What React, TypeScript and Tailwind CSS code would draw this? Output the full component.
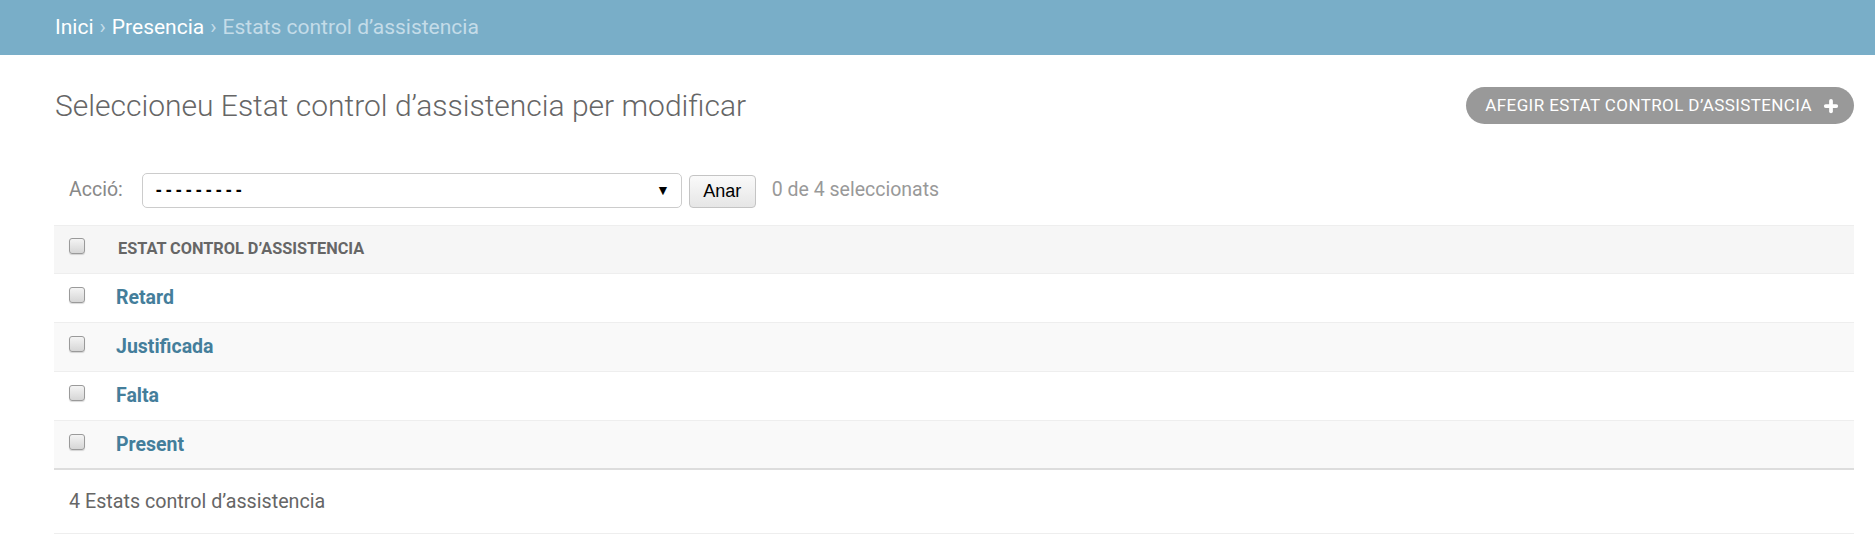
import { Plus } from 'lucide-react'

const rows = ['Retard', 'Justificada', 'Falta', 'Present']

function FakeCheckbox() {
  return (
    <span className="block w-4 h-4 rounded-[3px] border border-[#9a9a9a] bg-gradient-to-b from-[#f4f4f4] to-[#d6d6d6] shadow-[0_1px_1px_rgba(0,0,0,0.15)]" />
  )
}

export default function App() {
  return (
    <div className="min-h-screen bg-white font-['Roboto','Liberation_Sans',sans-serif] text-[#333]">
      <div className="h-[55px] bg-[#79aec8] px-[55px] flex items-center text-[21px] text-[#c4dce8]">
        <span className="text-white">Inici</span>
        <span className="mx-[6px] text-[#c4dce8]">›</span>
        <span className="text-white">Presencia</span>
        <span className="mx-[6px] text-[#c4dce8]">›</span>
        <span>Estats control d’assistencia</span>
      </div>

      <div className="pl-[54px] pr-[21px]">
        <div className="mt-[32px] h-[37px] flex items-center justify-between">
          <h1 className="pl-[1px] text-[30px] font-light text-[#666] leading-none">
            Seleccioneu Estat control d’assistencia per modificar
          </h1>
          <a className="h-[37px] pl-[19px] pr-[14px] rounded-full bg-[#999] flex items-center gap-[10px] text-white text-[17px] font-normal uppercase tracking-[0.4px]">
            Afegir estat control d’assistencia
            <Plus size={18} strokeWidth={5} />
          </a>
        </div>

        <div className="mt-[48px] h-[36px] flex items-center pl-[15px] text-[19.5px]">
          <span className="text-[#888] mr-[19px]">Acció:</span>
          <div className="w-[540px] h-[35px] border border-[#ccc] rounded-[5px] flex items-center justify-between pl-[13px] pr-[11px] font-['Liberation_Sans',sans-serif] text-black">
            <span className="font-bold tracking-[4px] text-[18px]">---------</span>
            <span className="text-[14px]">▼</span>
          </div>
          <div className="ml-[7px] w-[67px] h-[33px] mt-[3px] border border-[#c4c4c4] rounded-[4px] bg-gradient-to-b from-[#fafafa] to-[#e6e6e6] flex items-center justify-center font-['Liberation_Sans',sans-serif] text-[18px] text-black">
            Anar
          </div>
          <span className="ml-[16px] text-[#999]">0 de 4 seleccionats</span>
        </div>

        <div className="mt-[17px]">
          <div className="h-[49px] bg-[#f6f6f6] border-t border-b border-[#eee] flex items-start">
            <div className="w-[62px] pl-[15px] pt-[12px]">
              <FakeCheckbox />
            </div>
            <div className="pl-[2px] h-full flex items-center text-[16.3px] font-bold text-[#666] uppercase">
              Estat control d’assistencia
            </div>
          </div>
          {rows.map((r, i) => (
            <div
              key={r}
              className={
                'h-[49px] flex items-start ' +
                (i < rows.length - 1 ? 'border-b border-[#eee] ' : 'border-b-[2px] border-[#ddd] ') +
                (i % 2 === 1 ? 'bg-[#f9f9f9]' : 'bg-white')
              }
            >
              <div className="w-[62px] pl-[15px] pt-[13px]">
                <FakeCheckbox />
              </div>
              <a className="h-full flex items-center text-[19.5px] font-bold text-[#447e9b]">{r}</a>
            </div>
          ))}
          <div className="h-[64px] border-b border-[#eee] flex items-center pl-[15px] text-[19.7px] text-[#666]">
            4 Estats control d’assistencia
          </div>
        </div>
      </div>
    </div>
  )
}
